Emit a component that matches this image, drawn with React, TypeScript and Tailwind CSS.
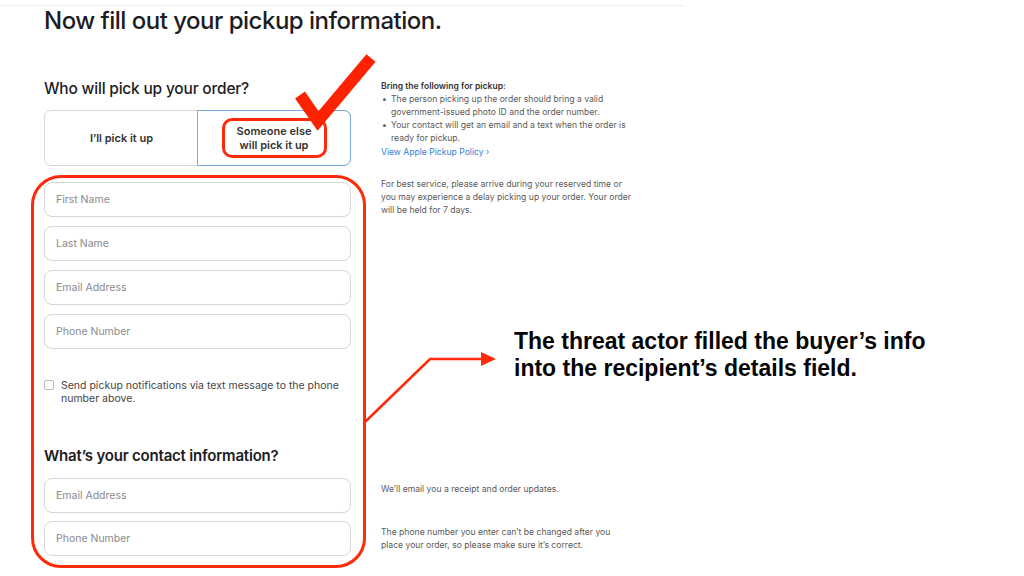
import React from 'react';

const SF = { fontFamily: 'Inter, "Liberation Sans", sans-serif' };

function Field({ label }: { label: string }) {
  return (
    <div className="flex h-[35px] w-[307px] items-center rounded-[8px] border border-[#d6d6d6] bg-white px-[11px] text-[10.5px] text-[#8a8a8e]">
      {label}
    </div>
  );
}

function Row({ left, right }: { left: React.ReactNode; right?: React.ReactNode }) {
  return (
    <div className="flex">
      <div className="w-[307px] shrink-0">{left}</div>
      <div className="ml-[30px] w-[256px] text-[8.6px] leading-[13px] text-[#5a5a5a]">{right}</div>
    </div>
  );
}

export default function App() {
  return (
    <div className="relative h-[576px] w-[1024px] overflow-hidden bg-white" style={SF}>
      {/* faint top rule */}
      <div className="mt-[5px] h-px w-[685px] bg-[#efefef]" />

      <div className="pl-[44px]">
        <h1 className="text-[24px] font-medium leading-[30px] tracking-[-0.5px] text-[#1d1d1f]">
          Now fill out your pickup information.
        </h1>

        {/* Who picks up */}
        <div className="mt-[43px]">
          <Row
            left={
              <div>
                <h2 className="text-[15.5px] font-medium leading-[20px] tracking-[-0.2px] text-[#1d1d1f]">
                  Who will pick up your order?
                </h2>
                <div className="mt-[11px] flex h-[56px] rounded-[7px] border border-[#d6d6d6]">
                  <div className="flex w-[153px] items-center justify-center text-[11px] font-semibold text-[#333]">
                    I’ll pick it up
                  </div>
                  <div className="-m-px flex flex-1 items-center justify-center rounded-r-[7px] border border-[#7aa7e0] text-center text-[11px] font-semibold leading-[14px] text-[#333]">
                    Someone else
                    <br />
                    will pick it up
                  </div>
                </div>
              </div>
            }
            right={
              <div className="mt-[1px]">
                <p className="font-semibold text-[#333]">Bring the following for pickup:</p>
                <ul>
                  <li className="flex">
                    <span className="w-[10px] shrink-0 pl-[1px]">•</span>
                    <span className="w-[236px]">The person picking up the order should bring a valid government-issued photo ID and the order number.</span>
                  </li>
                  <li className="flex">
                    <span className="w-[10px] shrink-0 pl-[1px]">•</span>
                    <span className="w-[236px]">Your contact will get an email and a text when the order is ready for pickup.</span>
                  </li>
                </ul>
                <p className="mt-[1px] text-[#2f7fd6]">View Apple Pickup Policy ›</p>
              </div>
            }
          />
        </div>

        {/* Recipient details */}
        <div className="mt-[16px]">
          <Row
            left={
              <div className="flex flex-col gap-[9px]">
                <Field label="First Name" />
                <Field label="Last Name" />
                <Field label="Email Address" />
                <Field label="Phone Number" />
              </div>
            }
            right={
              <p className="mt-[-4px]">
                For best service, please arrive during your reserved time or you may experience a delay picking up your order. Your order will be held for 7 days.
              </p>
            }
          />
        </div>

        <div className="mt-[30px] flex w-[307px] gap-[7px]">
          <span className="mt-[1px] h-[10px] w-[10px] shrink-0 rounded-[2px] border border-[#bdbdbd]" />
          <p className="text-[10.5px] leading-[13px] text-[#444]">
            Send pickup notifications via text message to the phone number above.
          </p>
        </div>

        {/* Contact */}
        <h2 className="mt-[41px] text-[15px] font-semibold leading-[20px] tracking-[-0.2px] text-[#1d1d1f]">
          What’s your contact information?
        </h2>
        <div className="mt-[12px]">
          <Row left={<Field label="Email Address" />} right={<p className="mt-[5px]">We’ll email you a receipt and order updates.</p>} />
        </div>
        <div className="mt-[8px]">
          <Row
            left={<Field label="Phone Number" />}
            right={
              <p className="mt-[5px] w-[232px]">
                The phone number you enter can’t be changed after you place your order, so please make sure it’s correct.
              </p>
            }
          />
        </div>
      </div>

      {/* annotation overlays */}
      <div className="pointer-events-none absolute left-[222px] top-[118px] h-[40px] w-[105px] rounded-[10px] border-[3px] border-[#ff2a0a]" />
      <div className="pointer-events-none absolute left-[31px] top-[175px] h-[393px] w-[335px] rounded-[30px] border-[3px] border-[#ff2a0a]" />

      <svg className="pointer-events-none absolute left-0 top-0" width="1024" height="576">
        {/* check mark */}
        <path d="M300 95 L318 121 L371 58" fill="none" stroke="#ff2200" strokeWidth="12" strokeLinejoin="miter" />
        {/* connector arrow */}
        <path d="M365 422 L430 359 L483 359" fill="none" stroke="#ff2a0a" strokeWidth="2.5" />
        <path d="M481 352 L496 359 L481 366 Z" fill="#ff2a0a" />
      </svg>

      <p
        className="absolute left-[514px] top-[328px] text-[23px] font-bold leading-[27px] text-[#050505]"
        style={{ fontFamily: '"Liberation Sans", Arial, sans-serif' }}
      >
        The threat actor filled the buyer’s info
        <br />
        into the recipient’s details field.
      </p>
    </div>
  );
}
